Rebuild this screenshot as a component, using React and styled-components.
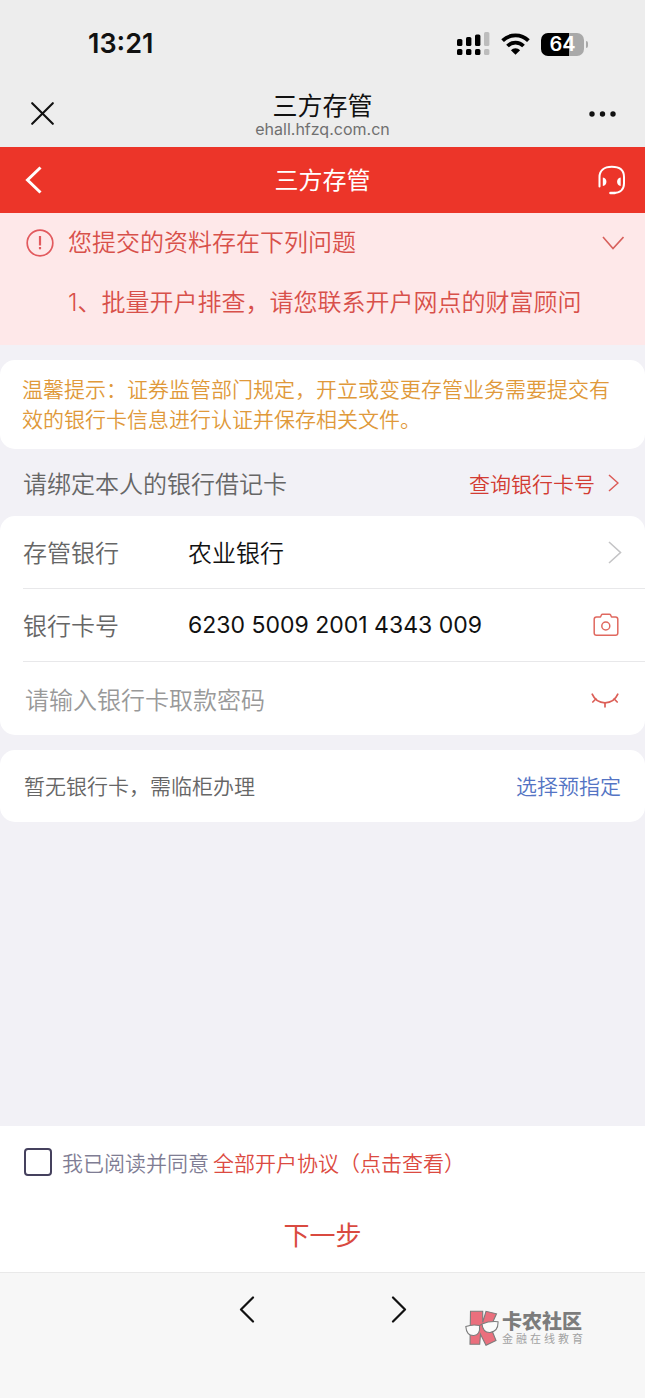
import React, { useState } from 'react';
import styled, { createGlobalStyle } from 'styled-components';

const GlobalStyle = createGlobalStyle`
	* {
		box-sizing: border-box;
	}
	body {
		margin: 0;
		background: #f2f1f6;
		font-family: Inter, 'Noto Sans CJK SC', sans-serif;
		font-weight: 350;
		color: #111;
	}
	button, input {
		font-family: inherit;
		font-weight: inherit;
		color: inherit;
	}
	svg {
		display: block;
		flex: none;
	}
`;

const Page = styled.div`
	display: flex;
	flex-direction: column;
	min-height: 100vh;
`;

const IconButton = styled.button`
	display: flex;
	padding: 0;
	border: none;
	background: none;
	cursor: pointer;
`;

/* status bar */

const StatusBar = styled.div`
	display: flex;
	align-items: center;
	justify-content: space-between;
	height: 88px;
	padding: 0 57px 0 88px;
	background: #ededed;
`;

const Time = styled.span`
	font-size: 27px;
	font-weight: 600;
	line-height: 32px;
`;

const StatusIcons = styled.div`
	display: flex;
	align-items: center;
	gap: 11px;
`;

const Battery = styled.div`
	display: flex;
	align-items: center;
	gap: 2px;
`;

const BatteryBody = styled.span`
	width: 43px;
	height: 23px;
	border-radius: 7px;
	background: linear-gradient(to right, #000 ${props => props.level}%, #a9a9a9 ${props => props.level}%);
	color: #fff;
	font-size: 20px;
	font-weight: 600;
	line-height: 23px;
	text-align: center;
`;

const BatteryTip = styled.span`
	width: 2px;
	height: 7px;
	border-radius: 0 2px 2px 0;
	background: #a9a9a9;
`;

/* browser bar */

const BrowserBar = styled.div`
	display: grid;
	grid-template-columns: 1fr auto 1fr;
	align-items: center;
	height: 59px;
	padding: 0 29px 8px;
	background: #ededed;

	> :first-child {
		margin-left: 2px;
	}
	> :last-child {
		justify-self: end;
	}
`;

const BrowserTitle = styled.div`
	display: flex;
	flex-direction: column;
	align-items: center;
	font-size: 25px;
	font-weight: 400;
	line-height: 30px;
`;

const Host = styled.span`
	color: #707070;
	font-size: 16px;
	line-height: 16px;
`;

/* app header */

const Header = styled.header`
	display: grid;
	grid-template-columns: 1fr auto 1fr;
	align-items: center;
	height: 66px;
	padding: 0 18px;
	background: #ec3529;
	color: #fff;

	> :first-child {
		margin-left: 7px;
	}
	> :last-child {
		justify-self: end;
	}
`;

const HeaderTitle = styled.h1`
	margin: 0;
	padding-top: 2px;
	font-size: 24px;
	font-weight: 400;
	line-height: 32px;
`;

/* alert */

const Alert = styled.section`
	padding: 14px 21px 26px 26px;
	background: #fee8e9;
	color: #d8504a;
	font-size: 24px;
	line-height: 32px;
`;

const AlertHead = styled.div`
	display: flex;
	align-items: center;
	gap: 14px;
`;

const AlertTitle = styled.span`
	flex: 1;
`;

const AlertText = styled.p`
	margin: 28px 0 0 42px;
`;

/* content */

const Content = styled.main`
	flex: 1;
	padding: 15px 0;
`;

const Card = styled.section`
	border-radius: 15px;
	background: #fff;
`;

const Tips = styled(Card)`
	padding: 15px 20px 14px 22px;
	color: #e0993a;
	font-size: 21px;
	line-height: 30px;
`;

const SectionHead = styled.div`
	display: flex;
	align-items: center;
	justify-content: space-between;
	height: 67px;
	padding: 0 26px 0 23px;
	color: #666;
	font-size: 24px;
`;

const QueryLink = styled.a`
	display: flex;
	align-items: center;
	gap: 13px;
	color: #d23c33;
	font-size: 21px;
	text-decoration: none;
`;

const Row = styled.div`
	display: flex;
	align-items: center;
	height: 73px;
	margin-left: 23px;
	padding-top: ${props => props.last ? 4 : 0}px;
	padding-right: ${props => props.end || 26}px;
	border-bottom: ${props => props.last ? 'none' : '1px solid #e8e8ea'};
	font-size: 24px;
`;

const Label = styled.label`
	width: 165px;
	padding-bottom: 2px;
	color: #666;
`;

const Value = styled.button`
	flex: 1;
	padding: 0 0 2px;
	border: none;
	background: none;
	font-size: 24px;
	text-align: left;
`;

const Field = styled.input`
	flex: 1;
	min-width: 0;
	padding: 0;
	border: none;
	outline: none;
	background: none;
	font-size: 23px;
	font-weight: 400;
`;

const PasswordField = styled(Field)`
	padding: 0 2px;
	font-size: 24px;
	font-weight: 350;

	&::placeholder {
		color: #999;
		opacity: 1;
	}
`;

const Counter = styled(Card)`
	display: flex;
	align-items: center;
	justify-content: space-between;
	height: 72px;
	margin-top: 15px;
	padding: 0 24px 2px;
	color: #666;
	font-size: 21px;
`;

const BlueLink = styled.a`
	color: #5474c4;
	text-decoration: none;
`;

/* footer */

const Footer = styled.footer`
	display: flex;
	flex-direction: column;
	background: #fff;
`;

const Agreement = styled.div`
	display: flex;
	align-items: center;
	height: 72px;
	padding: 0 24px;
	color: #7f7d94;
	font-size: 21px;
	white-space: nowrap;
`;

const AgreeLabel = styled.label`
	display: flex;
	align-items: center;
	gap: 10px;
`;

const Checkbox = styled.input`
	appearance: none;
	width: 28px;
	height: 28px;
	margin: 0;
	border: 2px solid #45415e;
	border-radius: 4px;
	background: ${props => props.checked ? '#45415e' : '#fff'};
`;

const RedLink = styled.a`
	margin-left: 4px;
	color: #dc4a41;
	text-decoration: none;
`;

const NextButton = styled.button`
	height: 74px;
	padding: 0 0 4px;
	border: none;
	background: none;
	color: #d94a40;
	font-size: 26px;
	font-weight: 400;
`;

const BottomBar = styled.nav`
	position: relative;
	display: flex;
	justify-content: center;
	gap: 136px;
	height: 126px;
	padding-top: 23px;
	border-top: 1px solid #e9e9e9;
	background: #f7f7f7;
`;

const Watermark = styled.div`
	position: absolute;
	top: 37px;
	right: 62px;
	display: flex;
	align-items: center;
	gap: 3px;
`;

const WatermarkText = styled.div`
	width: 81px;
	color: #7c7c7c;
	font-size: 20px;
	font-weight: 900;
	line-height: 22px;
`;

const WatermarkSub = styled.div`
	color: #a2a2a2;
	font-size: 11px;
	font-weight: 400;
	line-height: 13px;
	text-align: justify;
	text-align-last: justify;
`;

const Chevron = ({ d, width, height, color, stroke = 2, round }) => (
	<svg
		width={width}
		height={height}
		viewBox={`0 0 ${width} ${height}`}
		fill="none"
		stroke={color}
		strokeWidth={stroke}
		strokeLinecap={round ? 'round' : 'butt'}
		strokeLinejoin={round ? 'round' : 'miter'}
	>
		<path d={d} />
	</svg>
);

const SignalIcon = () => (
	<svg width="33" height="24" viewBox="0 0 33 24">
		<rect x="0" y="7" width="5.4" height="7" rx="1.6" />
		<rect x="9" y="5" width="5.4" height="9" rx="1.6" />
		<rect x="18" y="2.5" width="5.4" height="11.5" rx="1.6" />
		<rect x="27" y="0" width="5.4" height="14" rx="1.6" fill="#bdbdbd" />
		<rect x="0" y="17" width="5.4" height="6" rx="1.6" />
		<rect x="9" y="17" width="5.4" height="6" rx="1.6" />
		<rect x="18" y="17" width="5.4" height="6" rx="1.6" />
		<rect x="27" y="17" width="5.4" height="6" rx="1.6" fill="#bdbdbd" />
	</svg>
);

const WifiIcon = () => (
	<svg width="29" height="22" viewBox="0 0 29 22" fill="none" stroke="#000" strokeWidth="3.8">
		<path d="M1.6 7.700a18.3 18.3 0 0 1 25.8 0" />
		<path d="M6.5 13a11.4 11.4 0 0 1 16 0" />
		<path d="M14.5 21.800l-4.6-4.600a6.500 6.500 0 0 1 9.200 0z" fill="#000" stroke="none" />
	</svg>
);

const CloseIcon = () => (
	<svg width="23" height="23" viewBox="0 0 23 23" fill="none" stroke="#111" strokeWidth="2.1" strokeLinecap="round">
		<path d="M1.2 1.2l20.6 20.6M21.8 1.2L1.2 21.8" />
	</svg>
);

const MoreIcon = () => (
	<svg width="27" height="6" viewBox="0 0 27 6" fill="#111">
		<circle cx="3" cy="3" r="2.7" />
		<circle cx="13.5" cy="3" r="2.7" />
		<circle cx="24" cy="3" r="2.7" />
	</svg>
);

const HeadsetIcon = () => (
	<svg width="30" height="30" viewBox="0 0 30 30" fill="none" stroke="#fff" strokeWidth="2" strokeLinecap="round">
		<path d="M2.500 21.500V12C2.500 5.500 7 1.800 14.800 1.800S27 5.500 27 12v6.500c0 6-4 9.500-10.500 9.500" />
		<path d="M13.500 28h4" strokeWidth="2.6" />
		<path d="M5.800 12.500c2.600.3 3.600 2 3.600 4.200s-1 3.900-3.600 4.200z" fill="#fff" stroke="none" />
		<path d="M23.700 12.500c-2.600.3-3.600 2-3.600 4.200s1 3.900 3.600 4.200z" fill="#fff" stroke="none" />
	</svg>
);

const WarnIcon = () => (
	<svg width="28" height="28" viewBox="0 0 28 28" fill="none" stroke="#e25a5e">
		<circle cx="14" cy="14" r="12.8" strokeWidth="1.7" />
		<path d="M14 7v9.500" strokeWidth="2.2" />
		<path d="M14 18v2.300" strokeWidth="2.2" />
	</svg>
);

const CameraIcon = () => (
	<svg width="26" height="24" viewBox="0 0 26 24" fill="none" stroke="#e0685f" strokeWidth="1.5" strokeLinejoin="round">
		<path d="M3.500 4h4l1-2.200q.3-.6 1-.6h7q.7 0 1 .6L18.500 4h4q2.300 0 2.300 2.300v13.600q0 2.300-2.300 2.300h-19q-2.300 0-2.300-2.300V6.300Q1.200 4 3.500 4z" />
		<circle cx="12.8" cy="13" r="4" />
	</svg>
);

const EyeClosedIcon = () => (
	<svg width="28" height="15" viewBox="0 0 28 15" fill="none" stroke="#dc5f57" strokeWidth="1.7" strokeLinecap="round">
		<path d="M1.200 1.200C3.500 6.500 8 9.800 14 9.800s10.500-3.300 12.800-8.600" />
		<path d="M4.800 6L1.800 9M23.200 6l3 3M14 9.800v4" />
	</svg>
);

const KLogo = () => (
	<svg width="34" height="36" viewBox="0 0 34 36" stroke="#7c7c7c" strokeWidth="1.1">
		<path d="M5.500 1.300h12.200v11L21 1.300l10.500 2.500L25.500 17 31 30.500l-10 4.800-5.500-11-.8 10H5z" fill="#ea6f7d" />
		<path d="M.8 16.500q6.500-2.500 13.700-1 1 9.500-5.500 10Q1.500 26 .8 16.500z" fill="#fbfbfb" />
		<path d="M17 14q7-3 16-2.300.5 9.300-7.500 10.700Q17.800 23 17 14z" fill="#fbfbfb" />
		<path d="M14.500 16q1-1.800 2.500-1.500" fill="none" />
	</svg>
);

export default function App() {
	const [cardNo, setCardNo] = useState('6230 5009 2001 4343 009');
	const [password, setPassword] = useState('');
	const [agreed, setAgreed] = useState(false);

	return (
		<Page>
			<GlobalStyle />
			<StatusBar>
				<Time>13:21</Time>
				<StatusIcons>
					<SignalIcon />
					<WifiIcon />
					<Battery>
						<BatteryBody level={64}>64</BatteryBody>
						<BatteryTip />
					</Battery>
				</StatusIcons>
			</StatusBar>
			<BrowserBar>
				<IconButton aria-label="关闭"><CloseIcon /></IconButton>
				<BrowserTitle>
					三方存管
					<Host>ehall.hfzq.com.cn</Host>
				</BrowserTitle>
				<IconButton aria-label="更多"><MoreIcon /></IconButton>
			</BrowserBar>
			<Header>
				<IconButton aria-label="返回">
					<Chevron d="M15.500 1.500L2.500 14l13 12.500" width={18} height={28} color="#fff" stroke={3} />
				</IconButton>
				<HeaderTitle>三方存管</HeaderTitle>
				<IconButton aria-label="客服"><HeadsetIcon /></IconButton>
			</Header>
			<Alert>
				<AlertHead>
					<WarnIcon />
					<AlertTitle>您提交的资料存在下列问题</AlertTitle>
					<IconButton aria-label="收起">
						<Chevron d="M1 1l10 11.500L21.500 1" width={22} height={14} color="#d8605c" stroke={1.6} />
					</IconButton>
				</AlertHead>
				<AlertText>1、批量开户排查，请您联系开户网点的财富顾问</AlertText>
			</Alert>
			<Content>
				<Tips>温馨提示：证券监管部门规定，开立或变更存管业务需要提交有效的银行卡信息进行认证并保存相关文件。</Tips>
				<SectionHead>
					请绑定本人的银行借记卡
					<QueryLink href="#query">
						查询银行卡号
						<Chevron d="M1 1l9 8-9 8" width={11} height={18} color="#dc5a56" stroke={1.5} />
					</QueryLink>
				</SectionHead>
				<Card>
					<Row end={23}>
						<Label htmlFor="bank">存管银行</Label>
						<Value id="bank">农业银行</Value>
						<Chevron d="M1 1l11.500 10.500L1 22" width={14} height={23} color="#c4c4c6" stroke={1.6} />
					</Row>
					<Row>
						<Label htmlFor="card">银行卡号</Label>
						<Field id="card" value={cardNo} onChange={e => setCardNo(e.target.value)} />
						<IconButton aria-label="拍照识别"><CameraIcon /></IconButton>
					</Row>
					<Row last>
						<PasswordField
							type="password"
							aria-label="取款密码"
							placeholder="请输入银行卡取款密码"
							value={password}
							onChange={e => setPassword(e.target.value)}
						/>
						<IconButton aria-label="显示密码"><EyeClosedIcon /></IconButton>
					</Row>
				</Card>
				<Counter>
					暂无银行卡，需临柜办理
					<BlueLink href="#preset">选择预指定</BlueLink>
				</Counter>
			</Content>
			<Footer>
				<Agreement>
					<AgreeLabel>
						<Checkbox type="checkbox" checked={agreed} onChange={e => setAgreed(e.target.checked)} />
						我已阅读并同意
					</AgreeLabel>
					<RedLink href="#agreements">全部开户协议（点击查看）</RedLink>
				</Agreement>
				<NextButton>下一步</NextButton>
			</Footer>
			<BottomBar>
				<IconButton aria-label="后退">
					<Chevron d="M14 1.500L2 13.500l12 12" width={16} height={27} color="#111" stroke={2.2} round />
				</IconButton>
				<IconButton aria-label="前进">
					<Chevron d="M2 1.500l12 12-12 12" width={16} height={27} color="#111" stroke={2.2} round />
				</IconButton>
				<Watermark>
					<KLogo />
					<WatermarkText>
						卡农社区
						<WatermarkSub>金融在线教育</WatermarkSub>
					</WatermarkText>
				</Watermark>
			</BottomBar>
		</Page>
	);
}
